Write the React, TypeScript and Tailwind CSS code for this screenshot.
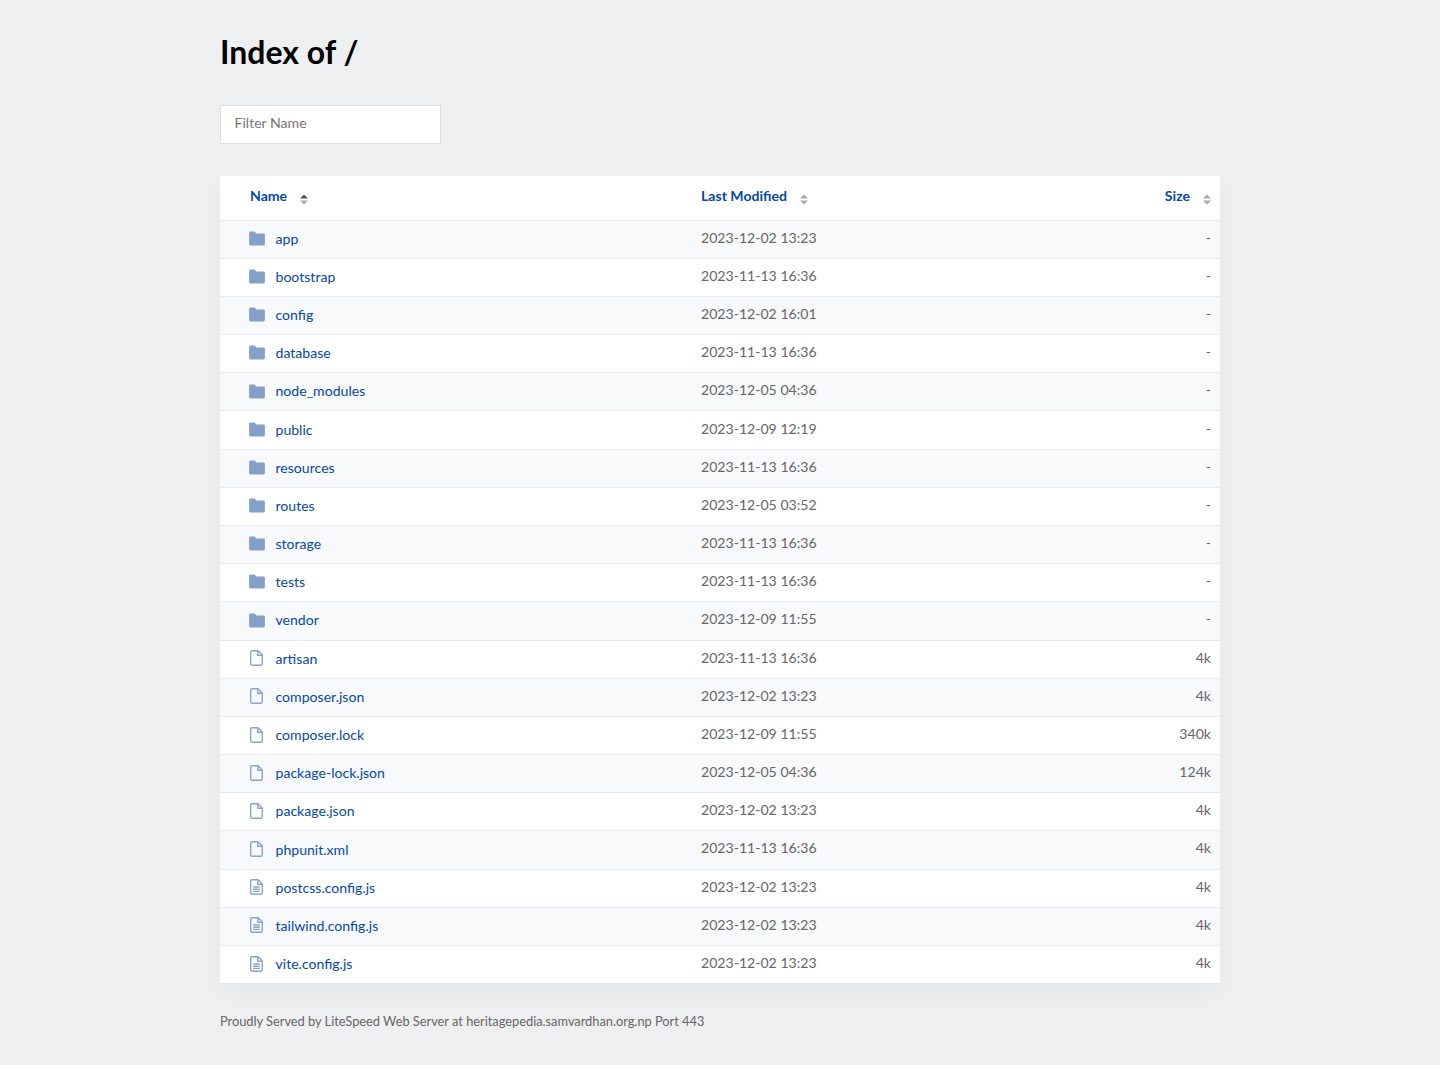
type Entry = { name: string; date: string; size: string; kind: "dir" | "file" | "text" };

const entries: Entry[] = [
  { name: "app", date: "2023-12-02 13:23", size: "-", kind: "dir" },
  { name: "bootstrap", date: "2023-11-13 16:36", size: "-", kind: "dir" },
  { name: "config", date: "2023-12-02 16:01", size: "-", kind: "dir" },
  { name: "database", date: "2023-11-13 16:36", size: "-", kind: "dir" },
  { name: "node_modules", date: "2023-12-05 04:36", size: "-", kind: "dir" },
  { name: "public", date: "2023-12-09 12:19", size: "-", kind: "dir" },
  { name: "resources", date: "2023-11-13 16:36", size: "-", kind: "dir" },
  { name: "routes", date: "2023-12-05 03:52", size: "-", kind: "dir" },
  { name: "storage", date: "2023-11-13 16:36", size: "-", kind: "dir" },
  { name: "tests", date: "2023-11-13 16:36", size: "-", kind: "dir" },
  { name: "vendor", date: "2023-12-09 11:55", size: "-", kind: "dir" },
  { name: "artisan", date: "2023-11-13 16:36", size: "4k", kind: "file" },
  { name: "composer.json", date: "2023-12-02 13:23", size: "4k", kind: "file" },
  { name: "composer.lock", date: "2023-12-09 11:55", size: "340k", kind: "file" },
  { name: "package-lock.json", date: "2023-12-05 04:36", size: "124k", kind: "file" },
  { name: "package.json", date: "2023-12-02 13:23", size: "4k", kind: "file" },
  { name: "phpunit.xml", date: "2023-11-13 16:36", size: "4k", kind: "file" },
  { name: "postcss.config.js", date: "2023-12-02 13:23", size: "4k", kind: "text" },
  { name: "tailwind.config.js", date: "2023-12-02 13:23", size: "4k", kind: "text" },
  { name: "vite.config.js", date: "2023-12-02 13:23", size: "4k", kind: "text" },
];

function SortArrows({ active }: { active?: boolean }) {
  return (
    <svg width="8" height="11" viewBox="0 0 8 11" className="block">
      <path d="M4 0.5 L8 4.5 H0 Z" fill={active ? "#555" : "#aaa"} />
      <path d="M4 10.5 L8 6.5 H0 Z" fill="#aaa" />
    </svg>
  );
}

function EntryIcon({ kind }: { kind: Entry["kind"] }) {
  if (kind === "dir") {
    return (
      <svg width="16" height="15" viewBox="0 0 16 15" className="block">
        <path
          d="M1.5 0.5 H5.6 L7.4 2.4 H14.5 A1.4 1.4 0 0 1 15.9 3.8 V13.1 A1.4 1.4 0 0 1 14.5 14.5 H1.5 A1.4 1.4 0 0 1 0.1 13.1 V1.9 A1.4 1.4 0 0 1 1.5 0.5 Z"
          fill="#85a0c8"
        />
      </svg>
    );
  }
  return (
    <svg width="13" height="16" viewBox="0 0 13 16" className="ml-[1px] block" fill="none" stroke="#8aa4ca" strokeWidth="1.4">
      <path d="M2 0.7 H8 L12.3 5 V13.8 A1.4 1.4 0 0 1 10.9 15.2 H2 A1.4 1.4 0 0 1 0.7 13.8 V2 A1.4 1.4 0 0 1 2 0.7 Z" />
      <path d="M7.8 0.9 V5.2 H12.1" />
      {kind === "text" && <path d="M3.2 8 H9.8 M3.2 10.2 H9.8 M3.2 12.4 H9.8" />}
    </svg>
  );
}

export default function App() {
  return (
    <div className="min-h-[1065px] bg-[#eeeff1] font-['Lato',sans-serif] text-[14.08px] text-[#666]">
      <div className="mx-auto w-[1000px] pt-[30px]">
        <h1 className="text-[32px] leading-[44px] font-bold text-black">Index of /</h1>

        <input
          placeholder="Filter Name"
          className="mt-[31px] block h-[39px] w-[221px] border border-[#dcdee1] bg-white px-[13.5px] pb-[4px] text-[14.08px] placeholder:text-[#757575]"
        />

        <div className="mt-8 bg-white shadow-[0_10px_25px_rgba(0,0,0,0.04)]">
          <div className="flex h-[44.64px] items-center border-b border-[#e9ebee] pr-[9px] pb-[4.3px] font-bold text-[#0747a6]">
            <div className="flex w-[481px] items-center pl-[30px]">
              <span>Name</span>
              <span className="mt-[7px] ml-[12.5px]">
                <SortArrows active />
              </span>
            </div>
            <div className="flex flex-1 items-center">
              <span>Last Modified</span>
              <span className="mt-[7px] ml-[13px]">
                <SortArrows />
              </span>
            </div>
            <div className="flex items-center">
              <span>Size</span>
              <span className="mt-[7px] ml-[13px]">
                <SortArrows />
              </span>
            </div>
          </div>

          {entries.map((entry, i) => (
            <div
              key={entry.name}
              className={`flex items-center pr-[9px] ${i % 2 === 0 ? "bg-[#f8f9fb]" : "bg-white"} ${
                i < entries.length - 1 ? "h-[38.172px] border-b border-[#e9ebee] pb-[3.86px]" : "h-[37.2px] pb-[3.4px]"
              }`}
            >
              <div className="flex w-[481px] items-center pl-[29px]">
                <span className="mt-[2.08px] flex w-[16px] justify-start">
                  <EntryIcon kind={entry.kind} />
                </span>
                <a href="#" className="mt-[2.08px] ml-[10.5px] text-[#0747a6]">
                  {entry.name}
                </a>
              </div>
              <div className="flex-1">{entry.date}</div>
              <div>{entry.size}</div>
            </div>
          ))}
        </div>

        <p className="mt-[30px] text-[12.8px] leading-[16px] text-[#666]">
          Proudly Served by LiteSpeed Web Server at heritagepedia.samvardhan.org.np Port 443
        </p>
      </div>
    </div>
  );
}
